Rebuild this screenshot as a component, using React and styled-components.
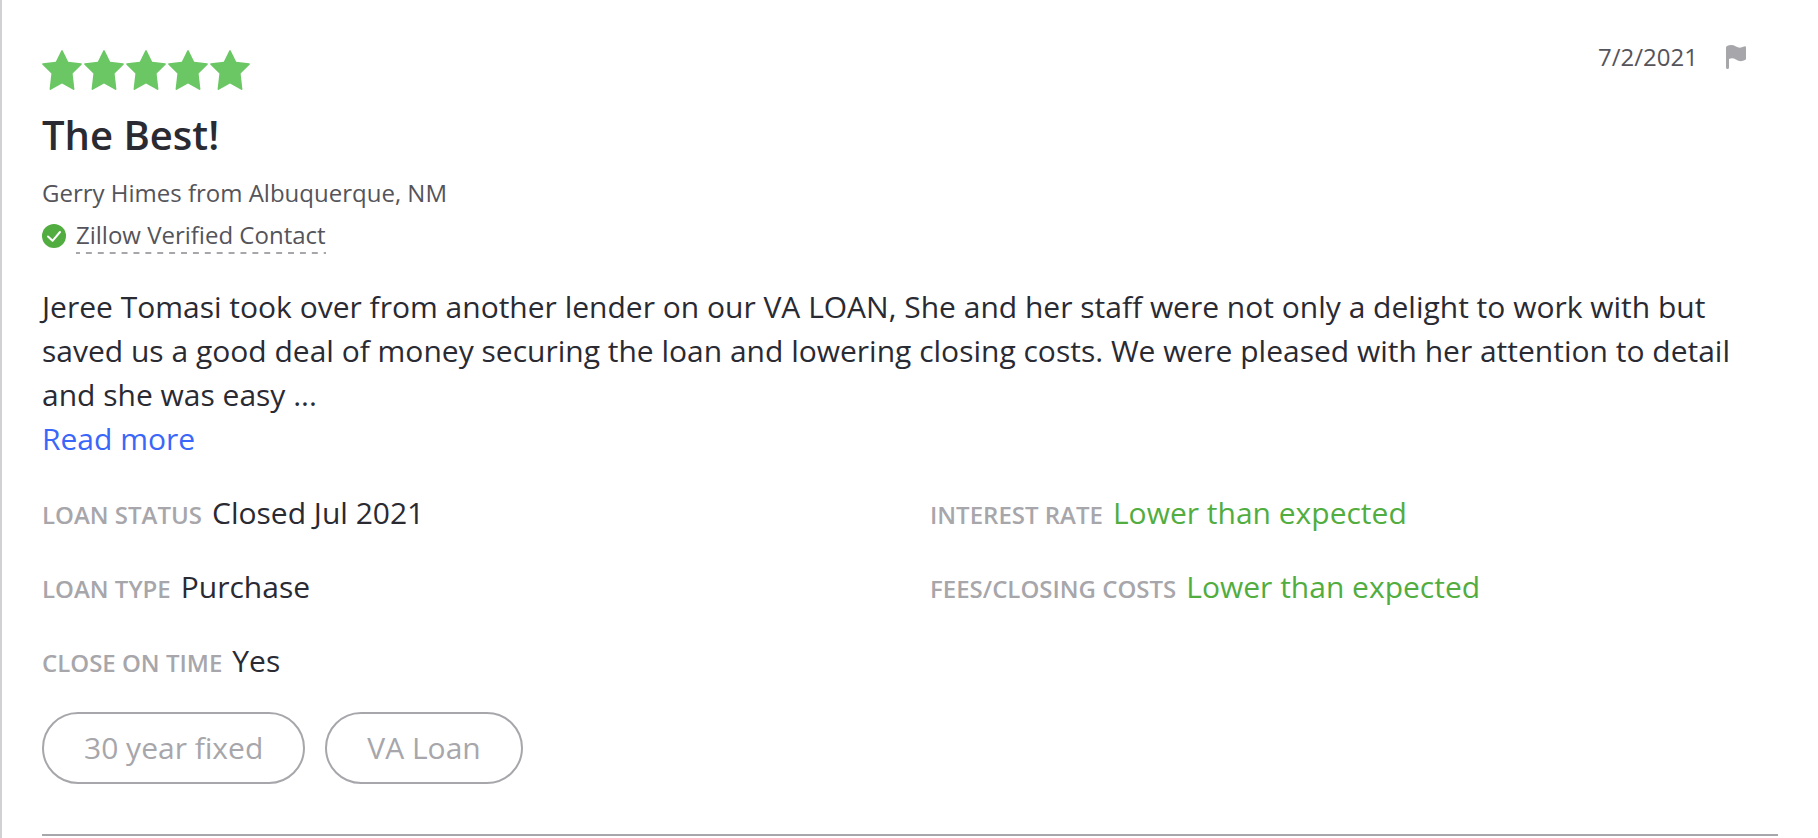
import React from 'react'
import styled, { createGlobalStyle } from 'styled-components';

const stars = [1, 2, 3, 4, 5];

export default function App() {
    return (
        <>
            <GlobalStyle />
            <Review>
                <Top>
                    <Stars role="img" aria-label="5 out of 5 stars">
                        {stars.map(star => (
                            <Star key={star} viewBox="0 0 42 42">
                                <path d="M19.2 2.800 Q20 1.200 20.800 2.800 L26.200 13.800 L39 15.300 Q40.600 15.600 39.500 16.700 L30.600 25.500 L32.400 41 Q32.400 42.300 31.200 41.700 L20 35.600 L8.800 41.700 Q7.600 42.300 7.600 41 L9.400 25.500 L0.500 16.700 Q-0.600 15.600 1 15.300 L13.800 13.800 Z" />
                            </Star>
                        ))}
                    </Stars>
                    <Meta>
                        <time dateTime="2021-07-02">7/2/2021</time>
                        <FlagButton aria-label="Report review">
                            <svg width="20" height="24" viewBox="0 0 20 24">
                                <path d="M0 2.500 Q0 1.500 1 1 C4 -0.300 7 -0.200 10 1.600 C12.500 3.100 15 3 18 1.600 Q20 0.800 20 2.500 V13.500 Q20 14.500 19 15 C16 16.700 13 16.500 10 14.500 C7.500 12.900 5 12.900 3 14 V22.500 Q3 24 1.500 24 Q0 24 0 22.500 Z" />
                            </svg>
                        </FlagButton>
                    </Meta>
                </Top>
                <Title>The Best!</Title>
                <Author>Gerry Himes from Albuquerque, NM</Author>
                <Verified>
                    <svg width="24" height="24" viewBox="0 0 24 24">
                        <circle cx="12" cy="12" r="12" fill="#52ad40" />
                        <path d="M6 12.500 L10.500 16.800 L18 8" fill="none" stroke="#fff" strokeWidth="2" strokeLinecap="round" strokeLinejoin="round" />
                    </svg>
                    <VerifiedText>Zillow Verified Contact</VerifiedText>
                </Verified>
                <Body>
                    Jeree Tomasi took over from another lender on our VA LOAN, She and her staff were not only a delight to work with but saved us a good deal of money securing the loan and lowering closing costs. We were pleased with her attention to detail and she was easy ...
                </Body>
                <ReadMore href="#more">Read more</ReadMore>
                <Details>
                    <List>
                        <Item><Label>LOAN STATUS</Label><Value>Closed Jul 2021</Value></Item>
                        <Item><Label>LOAN TYPE</Label><Value>Purchase</Value></Item>
                        <Item><Label>CLOSE ON TIME</Label><Value>Yes</Value></Item>
                    </List>
                    <List>
                        <Item><Label>INTEREST RATE</Label><Value $good>Lower than expected</Value></Item>
                        <Item><Label>FEES/CLOSING COSTS</Label><Value $good>Lower than expected</Value></Item>
                    </List>
                </Details>
                <Tags>
                    <Tag>30 year fixed</Tag>
                    <Tag>VA Loan</Tag>
                </Tags>
            </Review>
        </>
    )
}

const GlobalStyle = createGlobalStyle`
    body {
        margin: 0;
        background: #fff;
        color: #2a2a33;
        font-family: "Open Sans", sans-serif;
    }
`;

const Review = styled.article`
    box-sizing: border-box;
    min-height: 100vh;
    border-left: 2px solid #d1d1d5;
    padding: 39px 40px 0;
`;

const Top = styled.header`
    display: flex;
    justify-content: space-between;
    align-items: flex-start;
`;

const Stars = styled.div`
    display: flex;
    padding-top: 9px;
`;

const Star = styled.svg`
    width: 42px;
    height: 42px;
    fill: #6ac764;
`;

const Title = styled.h2`
    margin: 15px 0 0;
    font-size: 40px;
    line-height: 60px;
    font-weight: 600;
`;

const Meta = styled.div`
    display: flex;
    align-items: center;
    gap: 28px;
    padding-right: 32px;
    font-size: 24px;
    line-height: 36px;
    color: #54545a;
`;

const FlagButton = styled.button`
    display: flex;
    padding: 0;
    border: 0;
    background: none;
    fill: #a7a6ab;
    cursor: pointer;
`;

const Author = styled.p`
    margin: 11px 0 0;
    font-size: 24px;
    line-height: 34px;
    color: #54545a;
`;

const Verified = styled.div`
    display: flex;
    align-items: center;
    gap: 10px;
    margin-top: 8px;
    font-size: 24px;
    line-height: 34px;
    color: #54545a;
`;

// border-style: dashed draws the dashes too close together
const VerifiedText = styled.span`
    padding-bottom: 2px;
    background-image: linear-gradient(90deg, #a7a6ab 4px, transparent 4px 10px, #a7a6ab 10px);
    background-position: left bottom;
    background-size: 12px 2px;
    background-repeat: round no-repeat;
`;

const Body = styled.p`
    margin: 31px 0 0;
    font-size: 30px;
    line-height: 44px;
`;

const ReadMore = styled.a`
    font-size: 30px;
    line-height: 44px;
    color: #3a66fa;
    text-decoration: none;
`;

const Details = styled.div`
    display: grid;
    grid-template-columns: 1fr 1fr;
    column-gap: 40px;
    margin-top: 30px;
`;

const List = styled.dl`
    display: flex;
    flex-direction: column;
    gap: 30px;
    margin: 0;
`;

const Item = styled.div`
    display: flex;
    align-items: baseline;
    gap: 10px;
`;

const Label = styled.dt`
    font-size: 24px;
    line-height: 34px;
    font-weight: 600;
    color: #a7a6ab;
`;

const Value = styled.dd`
    margin: 0;
    font-size: 30px;
    line-height: 44px;
    color: ${props => (props.$good ? '#52ad40' : '#2a2a33')};
`;

const Tags = styled.div`
    display: flex;
    gap: 20px;
    padding-bottom: 50px;
    border-bottom: 2px solid #a7a6ab;
    margin-top: 29px;
`;

const Tag = styled.span`
    border: 2px solid #a7a6ab;
    border-radius: 36px;
    padding: 0 40px;
    font-size: 30px;
    line-height: 68px;
    color: #a7a6ab;
`;
